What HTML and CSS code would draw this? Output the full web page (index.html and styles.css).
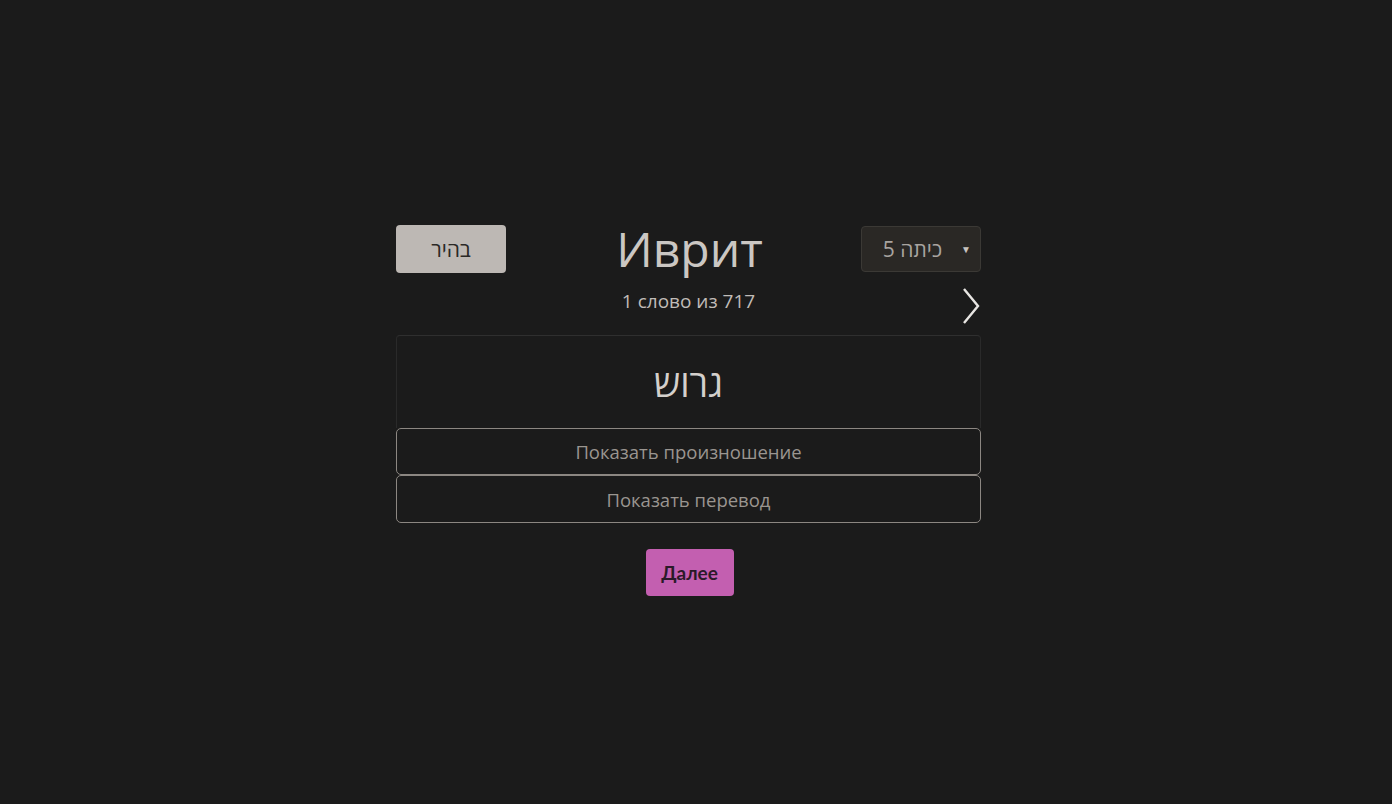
FILE: index.html
```html
<!DOCTYPE html>
<html lang="ru">
<head>
<meta charset="utf-8">
<link rel="stylesheet" href="styles.css">
</head>
<body>
<main class="app">
  <div class="top">
    <button class="theme-btn">בהיר</button>
    <h1 class="title">Иврит</h1>
    <div class="select"><span class="select-text">כיתה 5</span><span class="arrow">▼</span></div>
  </div>
  <div class="sub-row">
    <div class="counter">1 слово из 717</div>
    <svg class="chev" width="20" height="38" viewBox="0 0 20 38"><path d="M3 2 L17 19 L3 36" fill="none" stroke="#e8e6e3" stroke-width="2.4"/></svg>
  </div>
  <section class="card">
    <div class="word">גרוש</div>
  </section>
  <button class="reveal">Показать произношение</button>
  <button class="reveal last">Показать перевод</button>
  <div class="next-wrap"><button class="next">Далее</button></div>
</main>
</body>
</html>
```
FILE: styles.css
```css
html, body { margin: 0; padding: 0; }
body {
  background: #1b1b1b;
  font-family: "Open Sans", "Noto Sans", sans-serif;
  color: #c8c4c0;
  width: 1392px;
  height: 804px;
}
.app {
  width: 585px;
  margin: 0 auto;
  padding-top: 225px;
  position: relative;
  left: -7.5px;
}
.top {
  display: flex;
  align-items: flex-start;
  justify-content: space-between;
  height: 48px;
}
.theme-btn {
  width: 110px;
  height: 48px;
  background: #bdb8b4;
  border: none;
  border-radius: 4px;
  font-family: "Open Sans", sans-serif;
  font-size: 21px;
  color: #2a2826;
  padding: 0;
}
.title {
  margin: 0;
  font-weight: 500;
  font-size: 48px;
  line-height: 47px;
  color: #cbc7c3;
  position: relative;
  left: 6px;
}
.select {
  height: 44px;
  margin-top: 1px;
  background: #2a2825;
  border: 1px solid #3b3935;
  border-radius: 4px;
  display: flex;
  align-items: center;
  justify-content: flex-end;
  padding-right: 9px;
  box-sizing: content-box;
  width: 109px;
  gap: 19px;
}
.select-text {
  direction: rtl;
  font-size: 21px;
  color: #a8a4a0;
}
.arrow {
  font-size: 10px;
  color: #c8c4c0;
}
.sub-row {
  display: flex;
  justify-content: center;
  position: relative;
  height: 62px;
}
.counter {
  font-size: 19px;
  margin-top: 15px;
  line-height: 26px;
  color: #c0bcb8;
}
.chev {
  position: absolute;
  right: 0;
  top: 14px;
}
.card {
  border-top: 1px solid #2f2f2f;
  border-left: 1px solid #2a2a2a;
  border-right: 1px solid #2a2a2a;
  border-radius: 4px 4px 0 0;
  height: 92px;
  display: flex;
  align-items: center;
  justify-content: center;
}
.word {
  font-size: 37px;
  direction: rtl;
  color: #d4d0cc;
  font-weight: 500;
}
.reveal {
  display: block;
  width: 100%;
  height: 47px;
  background: #1b1b1b;
  border: 1px solid #8c8782;
  border-radius: 5px;
  color: #9a9590;
  font-family: "Open Sans", sans-serif;
  font-size: 18.5px;
  margin: 0;
  padding: 0;
}
.reveal.last {
  height: 48px;
}
.next-wrap {
  display: flex;
  justify-content: center;
  margin-top: 26px;
}
.next {
  width: 88px;
  height: 47px;
  background: #c35fb0;
  border: none;
  border-radius: 4px;
  font-family: "Lato", sans-serif;
  font-weight: 700;
  font-size: 19px;
  color: #2b1a29;
  padding: 0;
  position: relative;
  left: 1px;
}
```
